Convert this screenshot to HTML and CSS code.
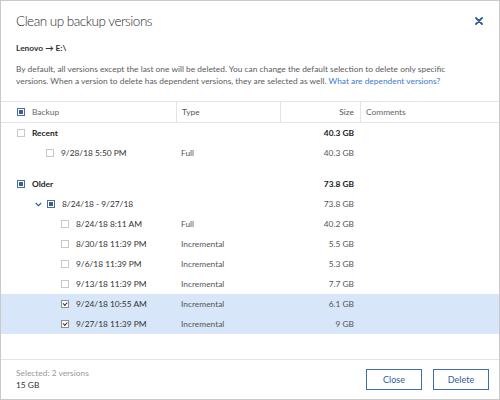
FILE: index.html
```html
<!DOCTYPE html>
<html lang="en">
<head>
    <meta charset="UTF-8">
    <title>Clean up backup versions</title>
    <link rel="stylesheet" href="styles.css">
</head>
<body>
    <div class="dialog">
        <div class="dialog-header">
            <h1>Clean up backup versions</h1>
            <button class="close-x" aria-label="Close">
                <svg width="8" height="8" viewBox="0 0 8 8"><path d="M1 1 L7 7 M7 1 L1 7" stroke="#2f5b9a" stroke-width="1.8" stroke-linecap="round"/></svg>
            </button>
        </div>
        <div class="source">Lenovo &rarr; E:\</div>
        <p class="intro">By default, all versions except the last one will be deleted. You can change the default selection to delete only specific<br>versions. When a version to delete has dependent versions, they are selected as well. <a href="#">What are dependent versions?</a></p>

        <div class="versions">
            <div class="row head">
                <div class="cell name lvl0"><span class="cb partial"></span>Backup</div>
                <div class="cell type">Type</div>
                <div class="cell size">Size</div>
                <div class="cell comments">Comments</div>
            </div>

            <div class="row group">
                <div class="cell name lvl0"><span class="cb"></span>Recent</div>
                <div class="cell type"></div>
                <div class="cell size">40.3 GB</div>
                <div class="cell comments"></div>
            </div>
            <div class="row">
                <div class="cell name lvl1"><span class="cb"></span>9/28/18 5:50 PM</div>
                <div class="cell type">Full</div>
                <div class="cell size">40.3 GB</div>
                <div class="cell comments"></div>
            </div>

            <div class="row group spaced">
                <div class="cell name lvl0"><span class="cb partial"></span>Older</div>
                <div class="cell type"></div>
                <div class="cell size">73.8 GB</div>
                <div class="cell comments"></div>
            </div>
            <div class="row">
                <div class="cell name lvl1 chain">
                    <svg class="chevron" width="7" height="5" viewBox="0 0 7 5"><path d="M0.8 1 L3.5 3.7 L6.2 1" fill="none" stroke="#2f5b9a" stroke-width="1.1"/></svg>
                    <span class="cb partial"></span>8/24/18 - 9/27/18
                </div>
                <div class="cell type"></div>
                <div class="cell size">73.8 GB</div>
                <div class="cell comments"></div>
            </div>
            <div class="row">
                <div class="cell name lvl2"><span class="cb"></span>8/24/18 8:11 AM</div>
                <div class="cell type">Full</div>
                <div class="cell size">40.2 GB</div>
                <div class="cell comments"></div>
            </div>
            <div class="row">
                <div class="cell name lvl2"><span class="cb"></span>8/30/18 11:39 PM</div>
                <div class="cell type">Incremental</div>
                <div class="cell size">5.5 GB</div>
                <div class="cell comments"></div>
            </div>
            <div class="row">
                <div class="cell name lvl2"><span class="cb"></span>9/6/18 11:39 PM</div>
                <div class="cell type">Incremental</div>
                <div class="cell size">5.3 GB</div>
                <div class="cell comments"></div>
            </div>
            <div class="row">
                <div class="cell name lvl2"><span class="cb"></span>9/13/18 11:39 PM</div>
                <div class="cell type">Incremental</div>
                <div class="cell size">7.7 GB</div>
                <div class="cell comments"></div>
            </div>
            <div class="row selected">
                <div class="cell name lvl2"><span class="cb checked"></span>9/24/18 10:55 AM</div>
                <div class="cell type">Incremental</div>
                <div class="cell size">6.1 GB</div>
                <div class="cell comments"></div>
            </div>
            <div class="row selected">
                <div class="cell name lvl2"><span class="cb checked"></span>9/27/18 11:39 PM</div>
                <div class="cell type">Incremental</div>
                <div class="cell size">9 GB</div>
                <div class="cell comments"></div>
            </div>
        </div>

        <div class="footer">
            <div class="summary">
                <div class="summary-label">Selected: 2 versions</div>
                <div class="summary-size">15 GB</div>
            </div>
            <div class="actions">
                <button class="btn">Close</button>
                <button class="btn">Delete</button>
            </div>
        </div>
    </div>
</body>
</html>
```

FILE: styles.css
```css
body {
    margin: 0;
    font-family: Lato, "Open Sans", sans-serif;
    font-size: 8.4px;
    color: #333;
    background: #fff;
}
.dialog {
    width: 500px;
    height: 400px;
    box-sizing: border-box;
    border: 1px solid #c9c9c9;
    display: flex;
    flex-direction: column;
}
.dialog-header {
    display: flex;
    justify-content: space-between;
    align-items: center;
    padding: 9px 16px 0 15px;
}
.dialog-header h1 {
    margin: 0;
    font-size: 13.5px;
    font-weight: 300;
    letter-spacing: -0.5px;
    line-height: 22px;
    color: #2b2b2b;
}
.close-x {
    background: none;
    border: none;
    padding: 0;
    width: 8px;
    height: 8px;
    display: flex;
    cursor: pointer;
}
.source {
    margin-top: 10px;
    padding-left: 15px;
    line-height: 12px;
    font-weight: 700;
    color: #333;
}
.intro {
    margin: 9px 0 0;
    padding-left: 15px;
    line-height: 12px;
    color: #5c5c5c;
    white-space: nowrap;
}
.intro a {
    color: #3b7ad0;
    text-decoration: none;
}
.versions {
    margin-top: 14px;
    border-top: 1px solid #e4e4e4;
}
.row {
    display: grid;
    grid-template-columns: 175px 104px 80px 1fr;
    height: 20px;
    align-items: center;
}
.row.head {
    border-bottom: 1px solid #e4e4e4;
    color: #666;
    align-items: stretch;
}
.row.head .cell {
    display: flex;
    align-items: center;
}
.row.head .cell + .cell {
    border-left: 1px solid #e4e4e4;
}
.row.head .size {
    justify-content: flex-end;
}
.row.group {
    font-weight: 700;
    color: #222;
}
.row.spaced {
    margin-top: 11px;
}
.row.selected {
    background: #d7e6f8;
}
.cell {
    white-space: nowrap;
}
.name {
    display: flex;
    align-items: center;
}
.lvl0 { padding-left: 16px; }
.lvl1 { padding-left: 45px; }
.lvl2 { padding-left: 60px; }
.lvl1.chain { padding-left: 34px; }
.chevron {
    margin-right: 5px;
}
.type {
    padding-left: 5px;
    color: #555;
}
.size {
    text-align: right;
    padding-right: 6px;
    color: #555;
}
.group .size {
    color: #222;
}
.comments {
    padding-left: 5px;
}
.cb {
    width: 6px;
    height: 6px;
    border: 1px solid #c8c8c8;
    margin-right: 7px;
    flex: none;
    position: relative;
    background: #fff;
}
.cb.partial {
    border-color: #4b6d9c;
}
.cb.partial::after {
    content: "";
    position: absolute;
    left: 1px;
    top: 1px;
    width: 4px;
    height: 4px;
    background: #3a5f95;
}
.cb.checked {
    border-color: #8e8e8e;
}
.cb.checked::after {
    content: "";
    position: absolute;
    left: 1px;
    top: 0;
    width: 3px;
    height: 1.5px;
    border-left: 1px solid #333;
    border-bottom: 1px solid #333;
    transform: translate(0, 1px) rotate(-45deg);
}
.footer {
    margin-top: auto;
    border-top: 1px solid #e4e4e4;
    padding: 7px 10px 8px 15px;
    display: flex;
    justify-content: space-between;
    align-items: center;
}
.summary {
    line-height: 12px;
}
.summary-label {
    color: #999;
}
.summary-size {
    color: #333;
}
.actions {
    display: flex;
    gap: 11px;
}
.btn {
    width: 56px;
    height: 21px;
    background: #fff;
    border: 1px solid #3f6ead;
    color: #2f5b9a;
    font-family: Lato, "Open Sans", sans-serif;
    font-size: 9px;
    padding: 0;
    cursor: pointer;
}
```
